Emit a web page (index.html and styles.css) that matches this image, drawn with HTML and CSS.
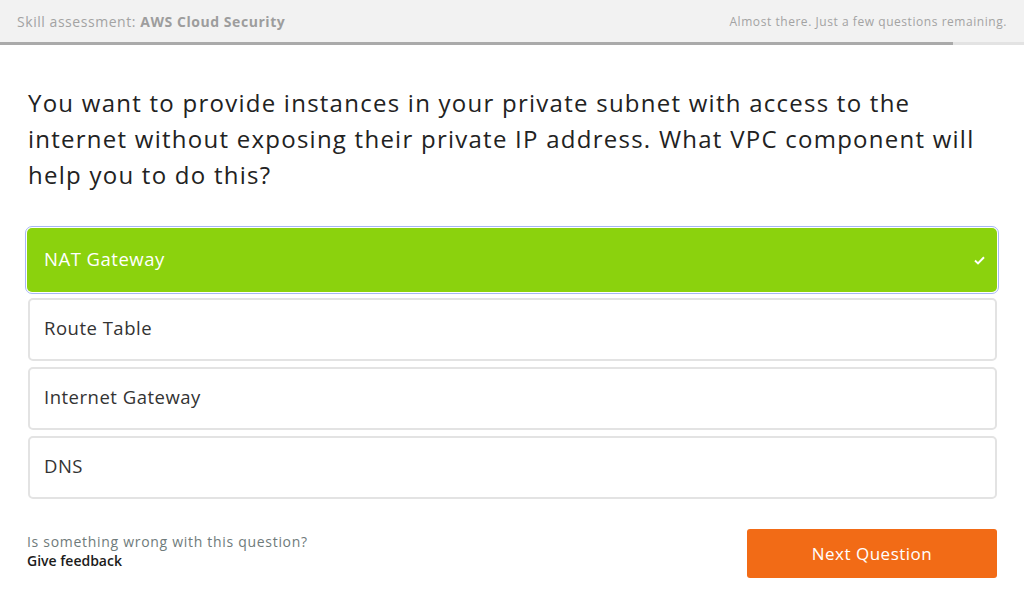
FILE: index.html
```html
<!DOCTYPE html>
<html>
<head>
<meta charset="utf-8">
<link rel="stylesheet" href="styles.css">
</head>
<body>
<header class="topbar">
  <div class="title">Skill assessment: <strong>AWS Cloud Security</strong></div>
  <div class="status">Almost there. Just a few questions remaining.</div>
</header>
<div class="progress"><div class="progress-fill" style="width:93.1%"></div></div>
<main class="content">
  <h1 class="question">You want to provide instances in your private subnet with access to the internet without exposing their private IP address. What VPC component will help you to do this?</h1>
  <ul class="options">
    <li class="option selected"><span>NAT Gateway</span>
      <svg class="check" width="11" height="9" viewBox="0 0 11 9"><path d="M1 4.6 L4 7.4 L10 1.2" fill="none" stroke="#fff" stroke-width="2"/></svg>
    </li>
    <li class="option"><span>Route Table</span></li>
    <li class="option"><span>Internet Gateway</span></li>
    <li class="option"><span>DNS</span></li>
  </ul>
  <div class="footer">
    <div class="feedback">
      <div class="feedback-q">Is something wrong with this question?</div>
      <div class="feedback-link">Give feedback</div>
    </div>
    <button class="next">Next Question</button>
  </div>
</main>
</body>
</html>
```
FILE: styles.css
```css
* { box-sizing: border-box; }
html, body { margin: 0; padding: 0; background: #fff; }
body { font-family: "Open Sans", "Noto Sans", sans-serif; color: #222; }
.topbar {
  height: 42px;
  background: #f2f2f2;
  display: flex;
  align-items: center;
  justify-content: space-between;
  padding: 0 17px 0 17px;
}
.title { font-size: 14px; color: #a3a3a3; letter-spacing: 0.55px; }
.title strong { font-weight: 700; color: #9d9d9d; }
.status { font-size: 12px; color: #a3a3a3; letter-spacing: 0.55px; }
.progress { height: 3px; background: #e3e3e3; }
.progress-fill { height: 100%; background: #aaaaaa; }
.content { padding: 0 27px; }
.question {
  margin: 40px 0 0 1px;
  font-size: 24px;
  line-height: 36px;
  font-weight: 400;
  letter-spacing: 1.25px;
  color: #222;
}
.options { list-style: none; margin: 35px 0 0 0; padding: 0; display: flex; flex-direction: column; gap: 6px; }
.option {
  height: 63px;
  border: 2px solid #e3e3e3;
  border-radius: 5px;
  display: flex;
  align-items: center;
  justify-content: space-between;
  padding: 0 14px 4px 14px;
  font-size: 18.5px;
  letter-spacing: 0.5px;
  color: #333;
  margin-left: 1px;
}
.option.selected {
  height: 64px;
  margin: 0;
  background: #8bd20d;
  border: none;
  color: #fff;
  padding: 0 12px 4px 17px;
  outline: 1px solid #a7b8f5;
  outline-offset: 1px;
}
.check { display: block; margin-top: 4px; }
.footer {
  margin-top: 30px;
  display: flex;
  justify-content: space-between;
  align-items: flex-start;
}
.feedback { font-size: 14px; line-height: 19px; padding-top: 3px; }
.feedback-q { color: #6f7b7b; letter-spacing: 0.7px; }
.feedback-link { color: #1b1b1b; font-weight: 600; }
.next {
  width: 250px;
  height: 49px;
  background: #f26b16;
  color: #fff;
  border: none;
  border-radius: 3px;
  font-family: inherit;
  font-size: 17px;
  letter-spacing: 0.5px;
  padding-bottom: 2px;
  margin-top: 0;
}
```
